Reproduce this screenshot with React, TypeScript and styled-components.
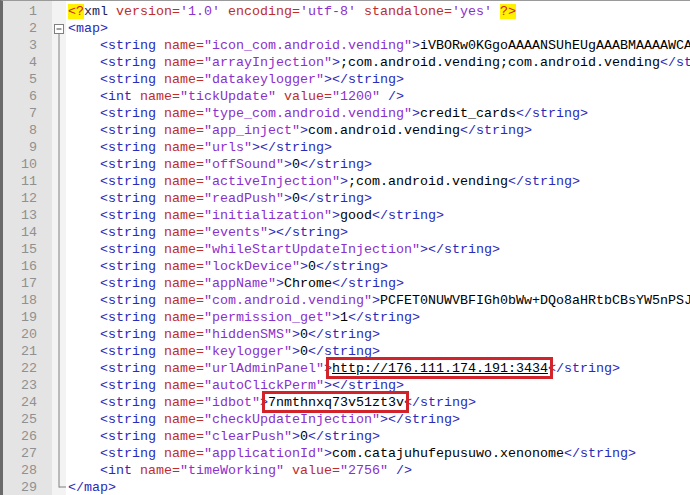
import React from 'react'
import styled, { createGlobalStyle } from 'styled-components'

const GlobalStyle = createGlobalStyle`
  html, body {
    margin: 0;
    padding: 0;
    background: #ffffff;
    overflow: hidden;
  }
`

const ROW = 17

const Frame = styled.div`
  display: flex;
  width: 690px;
  height: 495px;
  box-sizing: border-box;
  border-top: 1px solid #9a9a9a;
  border-left: 3px solid #6a6a6a;
  padding-top: 2px;
  background: #ffffff;
  overflow: hidden;
  font-family: 'Liberation Mono', 'Courier New', monospace;
  font-size: 13.33px;
`

const Gutter = styled.div`
  display: flex;
  flex-direction: column;
  flex: 0 0 49px;
  box-sizing: border-box;
  padding-right: 15px;
  margin-top: -2px;
  padding-top: 2px;
  background: #e4e4e4;
  color: #909090;
  text-align: right;
`

const LineNo = styled.div`
  height: ${ROW}px;
  line-height: ${ROW}px;
`

const FoldMargin = styled.div`
  flex: 0 0 14px;
  margin-top: -2px;
  padding-top: 2px;
  background: #f3f3f3;
`

const Code = styled.div`
  display: flex;
  flex-direction: column;
  flex: 1;
  min-width: 0;
  padding-left: 2px;
  overflow: hidden;
`

const CodeLine = styled.div`
  height: ${ROW}px;
  line-height: ${ROW}px;
  white-space: pre;
  color: #000000;
`

const Tag = styled.span<{ $dark?: boolean }>`
  color: ${({ $dark }) => ($dark ? '#1c1c5c' : '#2a2ab8')};
`

const Attr = styled.span`
  color: #c02c2c;
`

const Val = styled.span`
  color: #8a30cc;
`

const Decl = styled.span`
  color: #d02020;
  background: #fff200;
`

const Marked = styled.span<{ $link?: boolean }>`
  position: relative;
  color: #000000;
  text-decoration: ${({ $link }) => ($link ? 'underline' : 'none')};

  &::after {
    content: '';
    position: absolute;
    top: -4px;
    bottom: -3px;
    left: -6px;
    right: -5px;
    border: 3px solid #d3232a;
    pointer-events: none;
  }
`

type Kind = 'tag' | 'name' | 'attr' | 'val' | 'txt' | 'decl' | 'mark' | 'link'
type Tok = [Kind, string]

const IND = '    '

function str(name: string, content: string, mark?: 'mark' | 'link'): Tok[] {
  return [
    ['txt', IND],
    ['tag', '<string'],
    ['txt', ' '],
    ['attr', 'name='],
    ['val', `"${name}"`],
    ['tag', '>'],
    [mark ?? 'txt', content],
    ['tag', '</string>'],
  ]
}

function int(name: string, value: string): Tok[] {
  return [
    ['txt', IND],
    ['tag', '<int'],
    ['txt', ' '],
    ['attr', 'name='],
    ['val', `"${name}"`],
    ['txt', ' '],
    ['attr', 'value='],
    ['val', `"${value}"`],
    ['txt', ' '],
    ['tag', '/>'],
  ]
}

const lines: Tok[][] = [
  [
    ['decl', '<?'],
    ['name', 'xml'],
    ['txt', ' '],
    ['attr', 'version='],
    ['val', "'1.0'"],
    ['txt', ' '],
    ['attr', 'encoding='],
    ['val', "'utf-8'"],
    ['txt', ' '],
    ['attr', 'standalone='],
    ['val', "'yes'"],
    ['txt', ' '],
    ['decl', '?>'],
  ],
  [['tag', '<map>']],
  str('icon_com.android.vending', 'iVBORw0KGgoAAAANSUhEUgAAABMAAAAWCAYAAAAinad/AAAABHNCSVQICAgIfAhkiAAAAAlwSFlz'),
  str('arrayInjection', ';com.android.vending;com.android.vending'),
  str('datakeylogger', ''),
  int('tickUpdate', '1200'),
  str('type_com.android.vending', 'credit_cards'),
  str('app_inject', 'com.android.vending'),
  str('urls', ''),
  str('offSound', '0'),
  str('activeInjection', ';com.android.vending'),
  str('readPush', '0'),
  str('initialization', 'good'),
  str('events', ''),
  str('whileStartUpdateInjection', ''),
  str('lockDevice', '0'),
  str('appName', 'Chrome'),
  str('com.android.vending', 'PCFET0NUWVBFIGh0bWw+DQo8aHRtbCBsYW5nPSJlbiI+DQo8aGVhZD4NCjxtZXRhIGNoYXJzZXQ9'),
  str('permission_get', '1'),
  str('hiddenSMS', '0'),
  str('keylogger', '0'),
  str('urlAdminPanel', 'http://176.111.174.191:3434', 'link'),
  str('autoClickPerm', ''),
  str('idbot', '7nmthnxq73v51zt3v', 'mark'),
  str('checkUpdateInjection', ''),
  str('clearPush', '0'),
  str('applicationId', 'com.catajuhufepusuwo.xenonome'),
  int('timeWorking', '2756'),
  [['tag', '</map>']],
]

function Token({ tok }: { tok: Tok }) {
  const [kind, text] = tok
  switch (kind) {
    case 'tag':
      return <Tag>{text}</Tag>
    case 'name':
      return <Tag $dark>{text}</Tag>
    case 'attr':
      return <Attr>{text}</Attr>
    case 'val':
      return <Val>{text}</Val>
    case 'decl':
      return <Decl>{text}</Decl>
    case 'mark':
      return <Marked>{text}</Marked>
    case 'link':
      return <Marked $link>{text}</Marked>
    default:
      return <>{text}</>
  }
}

// fold margin: minus box on <map>, guide line down to </map>
function FoldMarks() {
  const h = lines.length * ROW
  const boxTop = ROW + 4
  const endY = (lines.length - 1) * ROW + ROW / 2
  return (
    <svg width="14" height={h} style={{ display: 'block' }}>
      <rect x="2.5" y={boxTop + 0.5} width="9" height="9" fill="#ffffff" stroke="#808080" />
      <line x1="4.5" y1={boxTop + 5} x2="9.5" y2={boxTop + 5} stroke="#404040" />
      <line x1="7" y1={boxTop + 10} x2="7" y2={endY} stroke="#808080" />
      <line x1="7" y1={endY - 0.5} x2="14" y2={endY - 0.5} stroke="#808080" />
    </svg>
  )
}

export default function App() {
  return (
    <>
      <GlobalStyle />
      <Frame>
        <Gutter>
          {lines.map((_, i) => (
            <LineNo key={i}>{i + 1}</LineNo>
          ))}
        </Gutter>
        <FoldMargin>
          <FoldMarks />
        </FoldMargin>
        <Code>
          {lines.map((toks, i) => (
            <CodeLine key={i}>
              {toks.map((t, j) => (
                <Token key={j} tok={t} />
              ))}
            </CodeLine>
          ))}
        </Code>
      </Frame>
    </>
  )
}
